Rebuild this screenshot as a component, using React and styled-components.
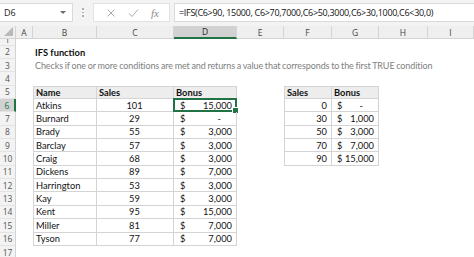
import React from "react";
import styled, { createGlobalStyle } from "styled-components";

const GlobalStyle = createGlobalStyle`
  html, body { margin: 0; padding: 0; background: #ffffff; }
  body {
    width: 474px;
    height: 257px;
    overflow: hidden;
    font-family: Lato, "Open Sans", sans-serif;
  }
  * { box-sizing: border-box; }
`;

const COLS = "16px 17px 64px 77px 63px 47px 48px 47px 49px 46px";
const ROW_H = 13.36;
const GREEN = "#217346";
const LINE = "#d4d4d4";

const Sheet = styled.div`
  width: 474px;
  height: 257px;
  overflow: hidden;
  display: flex;
  flex-direction: column;
`;

const Toolbar = styled.div`
  height: 26px;
  flex-shrink: 0;
  background: #f3f3f3;
  display: flex;
  align-items: flex-start;
  padding-top: 3px;
`;

const NameBox = styled.div`
  width: 73px;
  height: 19px;
  background: #fff;
  border: 1px solid #dadada;
  border-left: none;
  display: flex;
  align-items: center;
  justify-content: space-between;
  padding: 0 6px 0 4px;
  font-family: "Open Sans", sans-serif;
  font-size: 9px;
  color: #222;
`;

const Caret = styled.span`
  width: 0;
  height: 0;
  border-left: 3px solid transparent;
  border-right: 3px solid transparent;
  border-top: 3px solid #6a6a6a;
`;

const Dots = styled.div`
  width: 20px;
  height: 19px;
  display: flex;
  flex-direction: column;
  align-items: center;
  justify-content: center;
  gap: 2px;
  span {
    width: 1.5px;
    height: 1.5px;
    background: #b0b0b0;
  }
`;

const IconBox = styled.div`
  width: 77px;
  height: 19px;
  background: #fff;
  border: 1px solid #e2e2e2;
  display: flex;
  align-items: center;
  justify-content: space-around;
  padding: 0 4px 0 6px;
  color: #a8a8a8;
`;

const Fx = styled.span`
  font-family: "Liberation Serif", serif;
  font-style: italic;
  font-size: 11px;
  color: #8a8a8a;
`;

const FormulaBox = styled.div`
  flex: 1;
  margin-left: 4px;
  height: 19px;
  background: #fff;
  border: 1px solid #dadada;
  border-right: none;
  display: flex;
  align-items: center;
  padding-left: 4px;
  font-family: "Open Sans", sans-serif;
  font-size: 9px;
  letter-spacing: -0.3px;
  color: #111;
  white-space: nowrap;
`;

const Row = styled.div`
  display: grid;
  grid-template-columns: ${COLS};
  height: ${(p) => p.$h}px;
  flex-shrink: 0;
`;

const ColHead = styled.div`
  background: ${(p) => (p.$active ? "#d2d2d2" : "#efefef")};
  border-right: 1px solid ${LINE};
  border-bottom: ${(p) => (p.$active ? `2px solid ${GREEN}` : `1px solid ${LINE}`)};
  display: flex;
  align-items: center;
  justify-content: center;
  font-family: "Open Sans", sans-serif;
  font-size: 8.5px;
  color: ${(p) => (p.$active ? "#1f1f1f" : "#444")};
`;

const Corner = styled.div`
  background: #efefef;
  border-right: 1px solid ${LINE};
  border-bottom: 1px solid ${LINE};
  position: relative;
  &::after {
    content: "";
    position: absolute;
    right: 2px;
    bottom: 2px;
    border-left: 9px solid transparent;
    border-bottom: 9px solid #b9b9b9;
  }
`;

const RowHead = styled.div`
  background: ${(p) => (p.$active ? "#d2d2d2" : "#f3f3f3")};
  border-right: ${(p) => (p.$active ? `2px solid ${GREEN}` : `1px solid ${LINE}`)};
  border-bottom: 1px solid #e3e3e3;
  display: flex;
  align-items: center;
  justify-content: center;
  overflow: hidden;
  font-family: "Open Sans", sans-serif;
  font-size: 8.5px;
  color: ${(p) => (p.$active ? GREEN : "#555")};
`;

/* row 1 is scrolled so that only the foot of its number shows */
const CutNumber = styled.span`
  display: block;
  height: 13px;
  line-height: 13px;
  margin-top: -6px;
  align-self: flex-start;
`;

const Cell = styled.div`
  position: relative;
  display: flex;
  align-items: center;
  justify-content: ${(p) =>
    p.$align === "right" ? "flex-end" : p.$align === "center" ? "center" : "flex-start"};
  padding: 0 ${(p) => p.$pr ?? 3}px 0 ${(p) => p.$pl ?? 2}px;
  font-size: ${(p) => (p.$muted ? "9px" : "9.3px")};
  font-weight: ${(p) => (p.$bold ? 700 : 400)};
  letter-spacing: ${(p) => (p.$muted ? "-0.1px" : "0")};
  word-spacing: ${(p) => (p.$muted ? "-0.45px" : "0")};
  color: ${(p) => (p.$muted ? "#808080" : "#111")};
  background: ${(p) => (p.$head ? "#ededed" : "transparent")};
  border-left: ${(p) => (p.$first ? `1px solid ${LINE}` : "none")};
  border-right: ${(p) => (p.$table ? `1px solid ${LINE}` : "none")};
  border-bottom: ${(p) => (p.$table ? `1px solid ${LINE}` : "none")};
  border-top: ${(p) => (p.$top ? `1px solid ${LINE}` : "none")};
  white-space: nowrap;
  overflow: visible;
  z-index: ${(p) => (p.$spill ? 2 : 0)};
`;

const Money = styled(Cell)`
  justify-content: space-between;
`;

const Selection = styled.div`
  position: absolute;
  inset: -1px -1px -1px -1px;
  border: 2px solid ${GREEN};
  pointer-events: none;
  &::after {
    content: "";
    position: absolute;
    right: -4px;
    bottom: -4px;
    width: 5px;
    height: 5px;
    background: ${GREEN};
    border: 1px solid #fff;
  }
`;

const leftTable = [
  ["Atkins", 101, "15,000"],
  ["Burnard", 29, "-"],
  ["Brady", 55, "3,000"],
  ["Barclay", 57, "3,000"],
  ["Craig", 68, "3,000"],
  ["Dickens", 89, "7,000"],
  ["Harrington", 53, "3,000"],
  ["Kay", 59, "3,000"],
  ["Kent", 95, "15,000"],
  ["Miller", 81, "7,000"],
  ["Tyson", 77, "7,000"],
];

const rightTable = [
  [0, "-"],
  [30, "1,000"],
  [50, "3,000"],
  [70, "7,000"],
  [90, "15,000"],
];

const letters = ["A", "B", "C", "D", "E", "F", "G", "H", "I"];

const CrossIcon = () => (
  <svg width="10" height="10" viewBox="0 0 10 10">
    <path d="M1.5 1.5 L8.5 8.5 M8.5 1.5 L1.5 8.5" stroke="#a8a8a8" strokeWidth="1" fill="none" />
  </svg>
);

const CheckIcon = () => (
  <svg width="11" height="10" viewBox="0 0 11 10">
    <path d="M1 5.5 L4 8.5 L10 1.5" stroke="#a8a8a8" strokeWidth="1" fill="none" />
  </svg>
);

const MoneyCell = ({ value, pl, pr, active }) => (
  <Money $table $pl={pl} $pr={value === "-" ? pr + 11 : pr}>
    <span>$</span>
    <span>{value}</span>
    {active && <Selection />}
  </Money>
);

const Empty = ({ n }) => Array.from({ length: n }, (_, i) => <Cell key={i} />);

export default function App() {
  const rows = [];
  for (let r = 2; r <= 17; r++) {
    const cells = [];
    const li = r - 6;
    if (r === 2) {
      cells.push(<Cell key="a" />, <Cell key="b" $bold $spill>IFS function</Cell>, <Empty key="e" n={7} />);
    } else if (r === 3) {
      cells.push(
        <Cell key="a" />,
        <Cell key="b" $muted $spill>
          Checks if one or more conditions are met and returns a value that corresponds to the first TRUE condition
        </Cell>,
        <Empty key="e" n={7} />
      );
    } else if (r === 5) {
      cells.push(
        <Cell key="a" />,
        <Cell key="b" $table $head $bold $first $top>Name</Cell>,
        <Cell key="c" $table $head $bold $top>Sales</Cell>,
        <Cell key="d" $table $head $bold $top>Bonus</Cell>,
        <Cell key="e" />,
        <Cell key="f" $table $head $bold $first $top>Sales</Cell>,
        <Cell key="g" $table $head $bold $top>Bonus</Cell>,
        <Empty key="x" n={2} />
      );
    } else if (li >= 0 && li < leftTable.length) {
      const [name, sales, bonus] = leftTable[li];
      const right = rightTable[li];
      cells.push(
        <Cell key="a" />,
        <Cell key="b" $table $first>{name}</Cell>,
        <Cell key="c" $table $align="center">{sales}</Cell>,
        <MoneyCell key="d" value={bonus} pl={6} pr={4} active={r === 6} />,
        <Cell key="e" />
      );
      if (right) {
        cells.push(
          <Cell key="f" $table $first $align="right" $pr={4}>{right[0]}</Cell>,
          <MoneyCell key="g" value={right[1]} pl={5} pr={4} />
        );
      } else {
        cells.push(<Empty key="fg" n={2} />);
      }
      cells.push(<Empty key="x" n={2} />);
    } else {
      cells.push(<Empty key="e" n={9} />);
    }
    rows.push(
      <Row key={r} $h={ROW_H}>
        <RowHead $active={r === 6}>{r}</RowHead>
        {cells}
      </Row>
    );
  }

  return (
    <>
      <GlobalStyle />
      <Sheet>
        <Toolbar>
          <NameBox>
            <span>D6</span>
            <Caret />
          </NameBox>
          <Dots>
            <span />
            <span />
            <span />
          </Dots>
          <IconBox>
            <CrossIcon />
            <CheckIcon />
            <Fx>fx</Fx>
          </IconBox>
          <FormulaBox>=IFS(C6&gt;90, 15000, C6&gt;70,7000,C6&gt;50,3000,C6&gt;30,1000,C6&lt;30,0)</FormulaBox>
        </Toolbar>
        <Row $h={13}>
          <Corner />
          {letters.map((l) => (
            <ColHead key={l} $active={l === "D"}>{l}</ColHead>
          ))}
          <ColHead />
        </Row>
        <Row $h={6.5}>
          <RowHead>
            <CutNumber>1</CutNumber>
          </RowHead>
        </Row>
        {rows}
      </Sheet>
    </>
  );
}
